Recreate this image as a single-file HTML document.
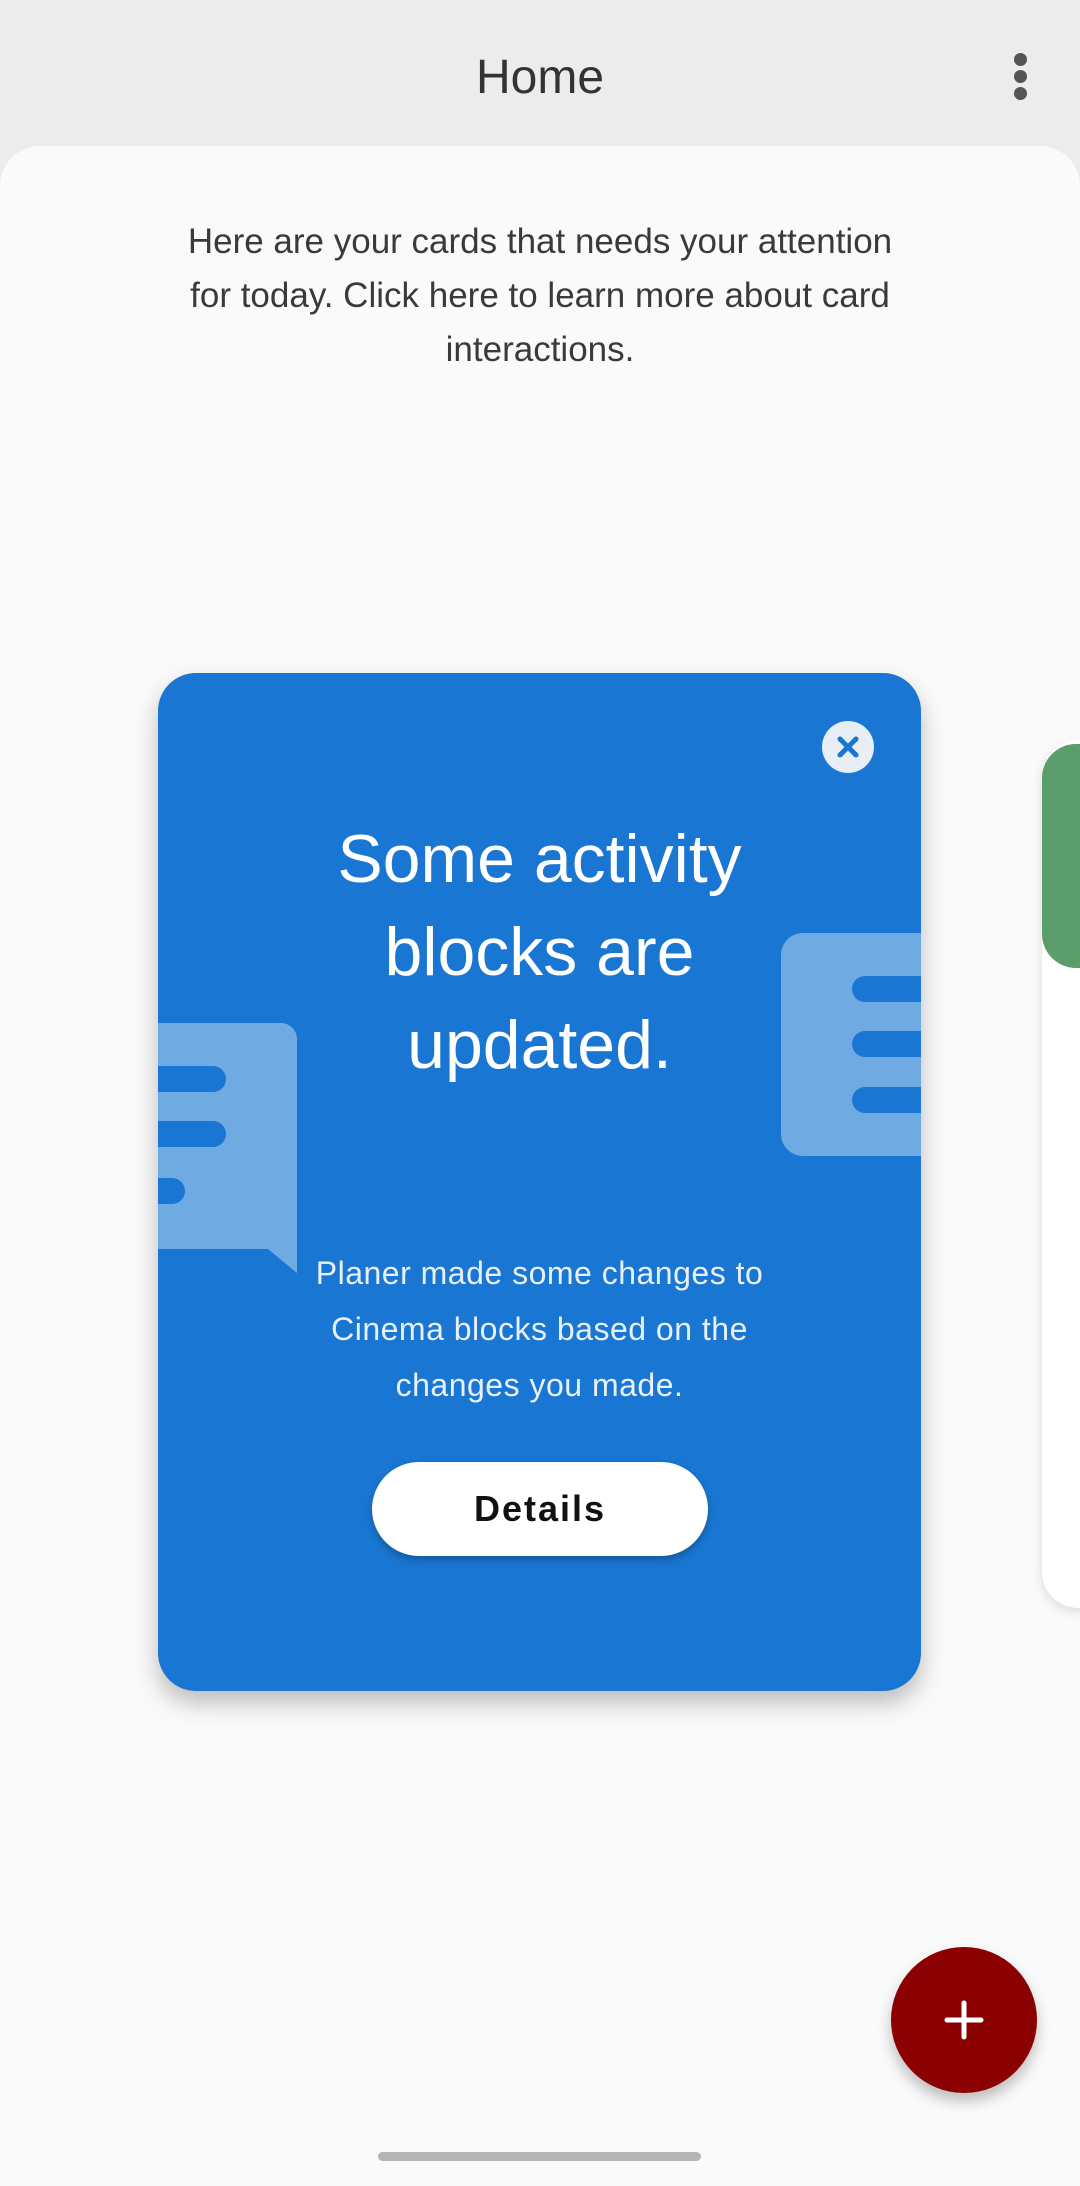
<!DOCTYPE html>
<html><head><meta charset="utf-8"><style>
*{margin:0;padding:0;box-sizing:border-box}
body{width:1080px;height:2176px;background:#ececec;position:relative;overflow:hidden;font-family:"Liberation Sans",sans-serif}
.top{position:absolute;left:0;top:0;width:1080px;height:146px;background:#ececec}
.title{position:absolute;left:0;width:1080px;top:50px;text-align:center;font-size:48px;color:#333}
.dot{position:absolute;left:1014px;width:13px;height:13px;border-radius:50%;background:#555}
.sheet{position:absolute;left:0;top:146px;width:1080px;height:2040px;background:#fafafa;border-radius:40px 40px 0 0}
.intro{position:absolute;left:40px;width:1000px;top:215px;text-align:center;font-size:35px;line-height:54px;color:#3a3a3a}
.back{position:absolute;left:1042px;top:740px;width:120px;height:868px;background:#fff;border-radius:36px;box-shadow:0 4px 10px rgba(0,0,0,.12)}
.green{position:absolute;left:1042px;top:744px;width:80px;height:224px;background:#5b9d6b;border-radius:34px 0 0 34px}
.card{position:absolute;left:158px;top:673px;width:763px;height:1018px;background:#1976d2;border-radius:38px;overflow:hidden;box-shadow:0 12px 24px rgba(0,0,0,.25)}
.h{position:absolute;left:0;width:763px;top:140px;text-align:center;color:#fff;font-size:68px;line-height:93px}
.p{position:absolute;left:0;width:763px;top:572px;text-align:center;color:#e8f0fa;font-size:32px;line-height:56px;letter-spacing:.5px}
.btn{position:absolute;left:214px;top:789px;width:336px;height:94px;background:#fff;border-radius:47px;text-align:center;line-height:94px;font-size:36px;font-weight:bold;letter-spacing:2px;color:#111;box-shadow:0 4px 8px rgba(0,0,0,.25)}
.x{position:absolute;left:664px;top:48px;width:52px;height:52px;border-radius:50%;background:#e8eef6}
.fab{position:absolute;left:891px;top:1947px;width:146px;height:146px;border-radius:50%;background:#8b0000;box-shadow:0 8px 14px rgba(0,0,0,.25)}
.handle{position:absolute;left:378px;top:2152px;width:323px;height:9px;border-radius:5px;background:#b5b5b5}
</style></head><body>
<div class="top"><div class="title">Home</div>
<div class="dot" style="top:53px"></div><div class="dot" style="top:70px"></div><div class="dot" style="top:87px"></div></div>
<div class="sheet"></div>
<div class="intro">Here are your cards that needs your attention<br>for today. Click here to learn more about card<br>interactions.</div>
<div class="back"></div>
<div class="green"></div>
<div class="card">
<svg width="763" height="1018" style="position:absolute;left:0;top:0">
<g fill="#fff" fill-opacity="0.38">
<path d="M-20 350 H123 a16 16 0 0 1 16 16 V600 L110 576 H-20 Z"/>
<rect x="623" y="260" width="160" height="223" rx="22"/>
</g>
<g fill="#1976d2">
<rect x="-20" y="393" width="88" height="26" rx="13"/>
<rect x="-20" y="448" width="88" height="26" rx="13"/>
<rect x="-20" y="505" width="47" height="26" rx="13"/>
<rect x="694" y="303" width="100" height="26" rx="13"/>
<rect x="694" y="358" width="100" height="26" rx="13"/>
<rect x="694" y="414" width="100" height="26" rx="13"/>
</g>
</svg>
<div class="x"><svg width="52" height="52"><path d="M18 18L34 34M34 18L18 34" stroke="#1976d2" stroke-width="5" stroke-linecap="round"/></svg></div>
<div class="h">Some activity<br>blocks are<br>updated.</div>
<div class="p">Planer made some changes to<br>Cinema blocks based on the<br>changes you made.</div>
<div class="btn">Details</div>
</div>
<div class="fab"><svg width="146" height="146"><path d="M73 56V90M56 73H90" stroke="#fff" stroke-width="5" stroke-linecap="round"/></svg></div>
<div class="handle"></div>
</body></html>
